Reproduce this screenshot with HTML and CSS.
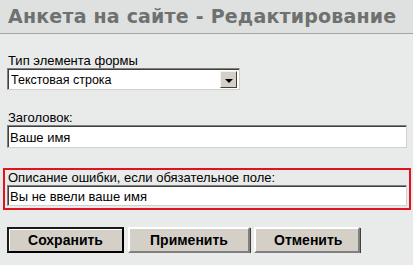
FILE: index.html
```html
<!DOCTYPE html>
<html lang="ru">
<head>
  <meta charset="UTF-8" />
  <title>Анкета на сайте - Редактирование</title>
  <link rel="stylesheet" href="styles.css">
</head>
<body>

<div class="page-header">
  <h1>Анкета на сайте - Редактирование</h1>
</div>

<form class="edit-form">
  <div class="field">
    <label for="type">Тип элемента формы</label>
    <div class="select-box">
      <select id="type">
        <option selected>Текстовая строка</option>
        <option>Список</option>
        <option>Флажок</option>
      </select>
      <span class="select-arrow"></span>
    </div>
  </div>

  <div class="field">
    <label for="title">Заголовок:</label>
    <input id="title" type="text" value="Ваше имя">
  </div>

  <div class="field field-error">
    <label for="error">Описание ошибки, если обязательное поле:</label>
    <input id="error" type="text" value="Вы не ввели ваше имя">
  </div>

  <div class="actions">
    <button type="submit" class="default">Сохранить</button>
    <button type="button">Применить</button>
    <button type="button">Отменить</button>
  </div>
</form>

</body>
</html>
```

FILE: styles.css
```css
body {
  margin: 0;
  background: #e9ebea;
  font-family: "Liberation Sans", Arial, sans-serif;
  color: #000;
}

.page-header {
  height: 33px;
  background: #dfe1e0;
  border-bottom: 1px solid #a3a5a4;
  padding-left: 8px;
}

.page-header h1 {
  margin: 0;
  font-family: "DejaVu Sans", Verdana, sans-serif;
  font-size: 19px;
  font-weight: bold;
  letter-spacing: 0.2px;
  line-height: 33px;
  color: #6e716f;
}

.edit-form {
  padding: 0 6px 0 7px;
}

.field {
  margin-top: 20px;
}

.field:first-child {
  margin-top: 19px;
}

.field label {
  display: block;
  font-size: 13px;
  line-height: 15px;
  padding-left: 1px;
}

.field input,
.select-box {
  box-sizing: border-box;
  border-top: 1px solid #808080;
  border-left: 1px solid #808080;
  border-right: 1px solid #d4d0c8;
  border-bottom: 1px solid #d4d0c8;
  box-shadow: inset 1px 1px 0 #404040;
  background: #fff;
}

.field input {
  display: block;
  width: 100%;
  height: 23px;
  padding: 1px 0 0 2px;
  font-family: "Liberation Sans", Arial, sans-serif;
  font-size: 13px;
  color: #000;
  outline: none;
}

.select-box {
  display: flex;
  width: 233px;
  height: 22px;
  padding: 2px 2px 1px 2px;
}

.select-box select {
  flex: 1;
  appearance: none;
  -webkit-appearance: none;
  border: none;
  background: #fff;
  padding: 0 0 0 1px;
  font-family: "Liberation Sans", Arial, sans-serif;
  font-size: 12.5px;
  color: #000;
  outline: none;
}

.select-arrow {
  position: relative;
  width: 17px;
  background: #d4d0c8;
  border-top: 1px solid #f4f2ee;
  border-left: 1px solid #f4f2ee;
  border-right: 1px solid #404040;
  border-bottom: 1px solid #404040;
  box-sizing: border-box;
}

.select-arrow::after {
  content: "";
  position: absolute;
  left: 4px;
  top: 7px;
  border-left: 4px solid transparent;
  border-right: 4px solid transparent;
  border-top: 4px solid #000;
}

.field-error {
  margin: 20px -4px 0 -4px;
  padding: 0 2px 2px 2px;
  border: 2px solid #e0141e;
}

.field-error label {
  line-height: 14px;
  padding-top: 1px;
}

.field-error input {
  height: 21px;
}

.actions {
  display: flex;
  gap: 4px;
  margin-top: 17px;
}

.actions button {
  height: 26px;
  padding: 0 18px;
  background: #d4d0c8;
  font-family: "Liberation Sans", Arial, sans-serif;
  font-size: 14px;
  font-weight: bold;
  color: #000;
  border-top: 2px solid #fff;
  border-left: 2px solid #fff;
  border-right: 2px solid #808080;
  border-bottom: 2px solid #808080;
  box-shadow: 1px 1px 0 #404040;
}

.actions button.default {
  width: 117px;
  border: 2px solid #1a1a1a;
  border-right-color: #000;
  border-bottom-color: #000;
  box-shadow: inset 1px 1px 0 #fff;
}

.actions button:nth-child(2) {
  width: 122px;
}

.actions button:nth-child(3) {
  width: 106px;
}
```
